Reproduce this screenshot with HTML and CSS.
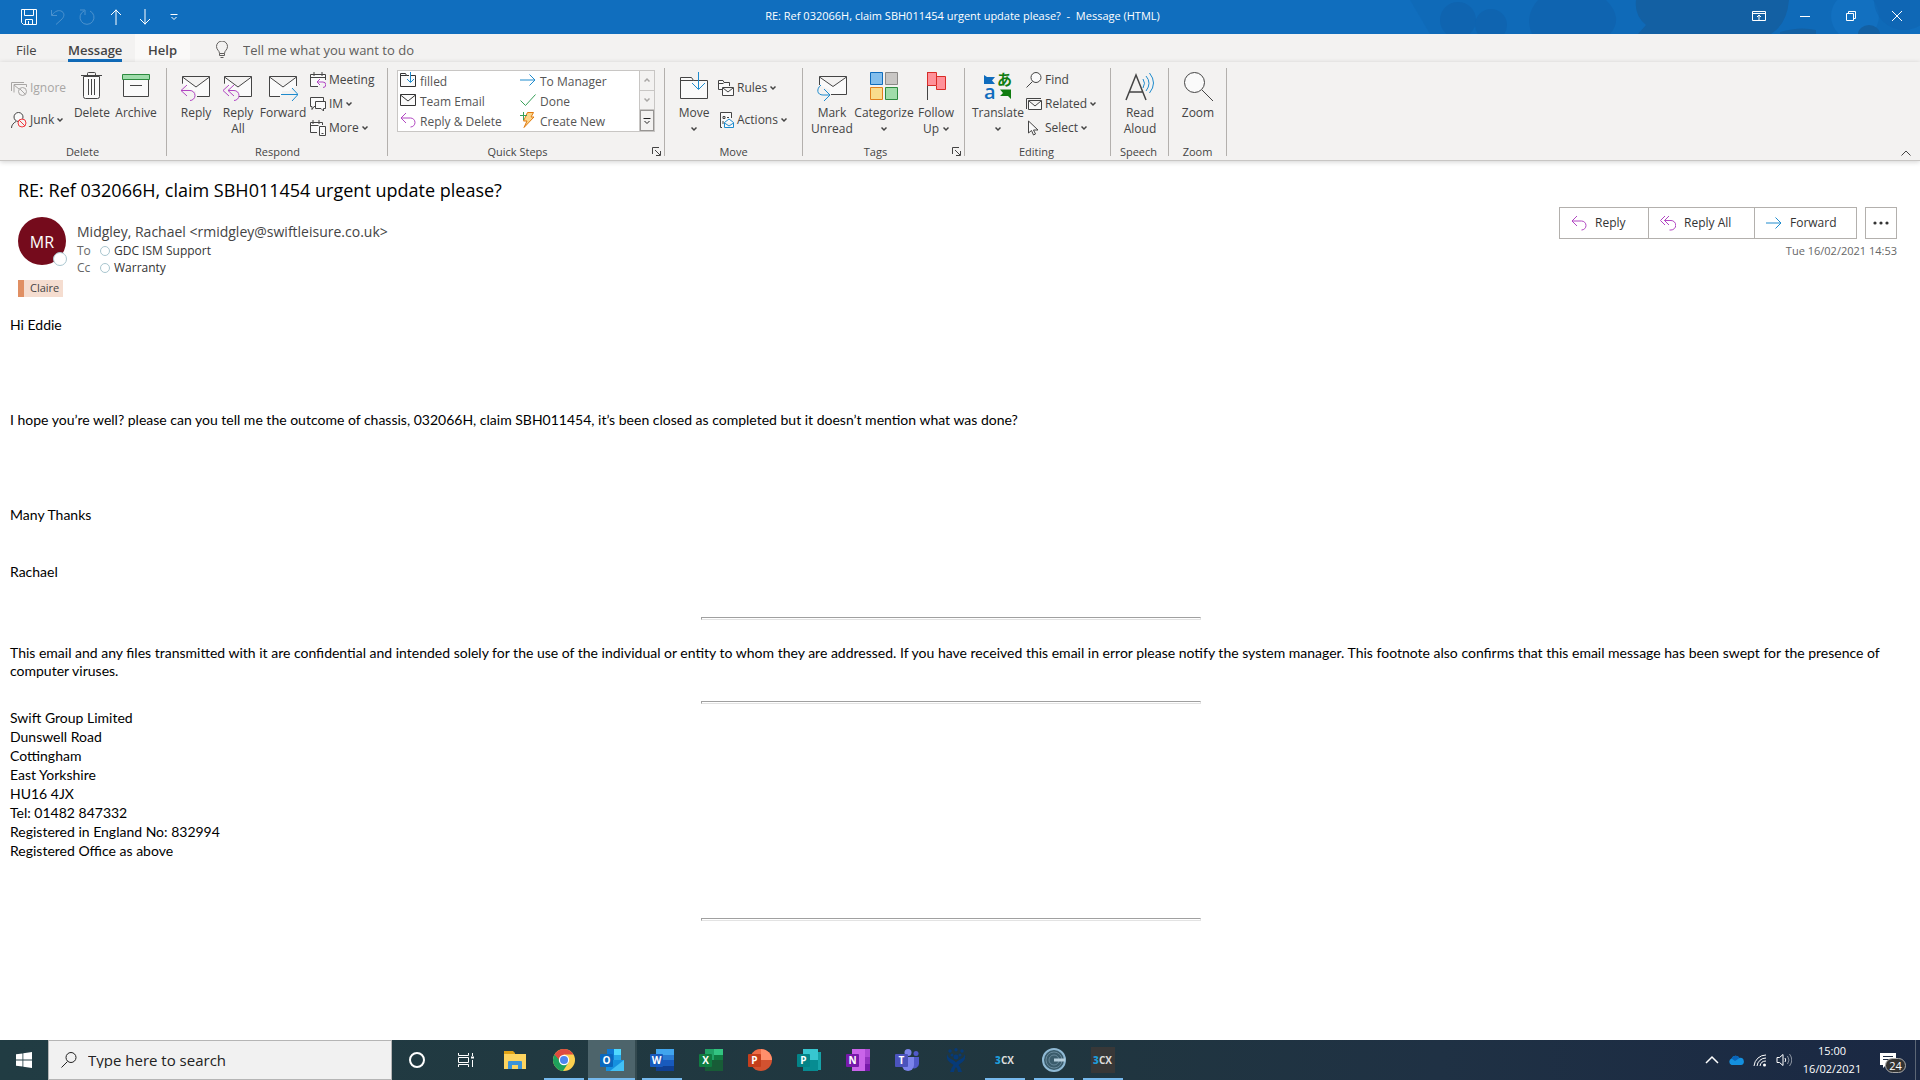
FILE: index.html
```html
<!DOCTYPE html>
<html lang="en">
<head>
<meta charset="utf-8">
<title>RE: Ref 032066H, claim SBH011454 urgent update please? - Message (HTML)</title>
<link rel="stylesheet" href="styles.css">
</head>
<body>
<svg class="defs" aria-hidden="true">
  <symbol id="reply" viewBox="0 0 16 16"><path d="M6 1 1 6l5 5M1 6h9.500a4.500 4.500 0 0 1 0 9" /></symbol>
  <symbol id="replyall" viewBox="0 0 16 16"><path d="M5 1 .5 5.500 5 10M9 1 4.500 5.500 9 10M4.500 5.500H11a4.500 4.500 0 0 1 0 9.500H9.500"/></symbol>
  <symbol id="forward" viewBox="0 0 16 16"><path d="M0 8h15M9.500 2.500 15 8l-5.500 5.500"/></symbol>
  <symbol id="chev" viewBox="0 0 6 6"><path d="m.5 1.500 2.500 2.500 2.500-2.500"/></symbol>
  <symbol id="launch" viewBox="0 0 9 9"><path d="M.5 7V.5H7M3 3l5 5M8.500 4v4.500H4"/></symbol>
  <symbol id="folder" viewBox="0 0 30 30"><path class="f" d="M1.500 6.500h11l2 3h14v18h-27zM1.500 9.500h13"/><path class="bl" d="M19.500 1v17M13 12l6.500 6.500L26 12"/></symbol>
  <symbol id="env" viewBox="0 0 16 16"><path class="f" d="M.5 2.500h15v11H.5z"/><path d="m.5 3 7.500 6 7.500-6"/></symbol>
</svg>

<header class="titlebar">
  <svg class="decor" viewBox="0 0 540 34" preserveAspectRatio="xMaxYMin slice" aria-hidden="true">
    <g fill="#0f64b0"><path d="M30 0h500v34H50z" opacity=".35"/><circle cx="78" cy="20" r="18"/><circle cx="111" cy="25" r="16"/><path d="M158 0h68q18 18 4 34h-78q-8-18 6-34z"/></g>
    <path d="M256 0h153q-2 24-18 34H258l8-9q-12-10-10-25z" fill="#1360a3"/><circle cx="475" cy="16" r="24" fill="#1270c0"/><path d="M400 32q20-6 36-2v4h-36zM478 34a11 9 0 0 1 22 0z" fill="#1360a3"/><circle cx="524" cy="0" r="30" fill="#0f64b0" opacity=".6"/>
  </svg>
  <nav class="quick" aria-label="Quick access">
    <button aria-label="Save"><svg viewBox="0 0 16 16"><path d="M.5.5h15v15h-13l-2-2zM3.500.5v6h9v-6M4.500 15.500v-5h7v5M7.500 12v3"/></svg></button>
    <button aria-label="Undo" class="dim"><svg viewBox="0 0 16 16"><path d="M1.500 1v5.500H7M2 6C5 2 9 .5 12 2.500S14 8 12 10l-6 5.500"/></svg></button>
    <button aria-label="Redo" class="dim"><svg viewBox="0 0 16 16"><path d="M1 1h5v5M11 2a7 7 0 1 1-6 0"/></svg></button>
    <button aria-label="Previous item"><svg viewBox="0 0 16 16"><path d="M8 16V.5M3 6l5-5 5 5"/></svg></button>
    <button aria-label="Next item"><svg viewBox="0 0 16 16"><path d="M8 0v15.500M3 10l5 5 5-5"/></svg></button>
    <button aria-label="Customize"><svg viewBox="0 0 16 16"><path d="M4.500 5.500h7M5.500 8 8 10.500 10.500 8"/></svg></button>
  </nav>
  <h1>RE: Ref 032066H, claim SBH011454 urgent update please?&nbsp; -&nbsp; Message (HTML)</h1>
  <div class="winctl">
    <button aria-label="Ribbon display options"><svg viewBox="0 0 14 14"><path d="M.5 2.500h13v9H.5zM.5 4.500h13M7 11V6.500M5 8l2-2 2 2"/></svg></button>
    <button aria-label="Minimise"><svg viewBox="0 0 14 14"><path d="M2 7.500h10"/></svg></button>
    <button aria-label="Restore"><svg viewBox="0 0 14 14"><path d="M2.500 4.500h7v7h-7zM4.500 4V2.500h7v7H10"/></svg></button>
    <button aria-label="Close"><svg viewBox="0 0 14 14"><path d="m2 2 10 10M12 2 2 12"/></svg></button>
  </div>
</header>

<nav class="tabs">
  <a href="#file" class="file">File</a>
  <a href="#message" class="active">Message</a>
  <a href="#help" class="hover">Help</a>
  <label class="tell"><svg viewBox="0 0 12 18"><path d="M3.500 12.500c0-3-3-3.500-3-7a5.500 5.500 0 0 1 11 0c0 3.500-3 4-3 7zM3.500 12.500v2h5v-2M4.500 16.500h3"/></svg><input type="text" placeholder="Tell me what you want to do"></label>
</nav>

<section class="ribbon" aria-label="Ribbon">
  <div class="group g-delete">
    <div class="tools">
      <div class="stack two">
        <button class="small off" disabled><svg viewBox="0 0 16 16"><path d="M3 12.500V4.500h12.500V7M.5 11V2.500H13M3 5l5 4"/><circle cx="11.500" cy="11.500" r="4"/><path d="m9 9 5 5"/></svg>Ignore</button>
        <button class="small"><svg viewBox="0 0 16 16"><circle class="f" cx="7.500" cy="5" r="4.500"/><path d="M.5 16c0-3 2-5 4.500-6.500"/><circle class="red" cx="11" cy="11" r="4"/><path class="red" d="m8 8 6 6"/></svg>Junk<svg class="chev"><use href="#chev"/></svg></button>
      </div>
      <button class="big w44"><svg viewBox="0 0 30 30"><path class="f" d="M6.500 5.500h16v20a2 2 0 0 1-2 2h-12a2 2 0 0 1-2-2z"/><path d="M4 4.500h21M10.500 4.500v-2a1 1 0 0 1 1-1h6a1 1 0 0 1 1 1v2M11.500 8v16M14.500 8v16M17.500 8v16"/></svg>Delete</button>
      <button class="big w44"><svg viewBox="0 0 30 30"><path class="f" d="M2.500 8.500h25v17h-25z"/><path fill="#9fdcab" stroke="#2c8a3f" d="M1.500 3.500h27v5h-27z"/><path d="M9 14.500h12"/></svg>Archive</button>
    </div>
    <h2>Delete</h2>
  </div>
  <div class="group g-respond">
    <div class="tools">
      <button class="big w42"><svg viewBox="0 0 30 30"><path class="f" d="M1.500 13V5.500h27v20H16M1.500 6l13.500 10L28.500 6"/><path class="gap" d="M1 12v14h14V20H6z"/><path class="pu" d="m6 14-6 5.500L6 25M0 19.500h9a5 5 0 0 1 5 5 5 5 0 0 1-5 5"/></svg>Reply</button>
      <button class="big w42"><svg viewBox="0 0 30 30"><path class="f" d="M1.500 13V5.500h27v20H16M1.500 6l13.500 10L28.500 6"/><path class="gap" d="M1 12v14h15V20H6z"/><path class="pu" d="m6 14-6 5.500L6 25M11 14l-6 5.500 6 5.500M5 19.500h6a5 5 0 0 1 5 5 5 5 0 0 1-5 5"/></svg>Reply All</button>
      <button class="big w48"><svg viewBox="0 0 30 30"><path class="f" d="M12 25.500H1.500v-20h27V15M1.500 6l13.500 10L28.500 6"/><path class="gap" d="M14 20h14v6H14z"/><path class="bl" d="M13 23.500h17M24 17l6 6.500-6 6.500"/></svg>Forward</button>
      <div class="stack three">
        <button class="small"><svg viewBox="0 0 16 16"><path class="f" d="M8 14.500H.5v-12h15V8M.5 5.500h15M4 0v4M12 0v4"/><path class="pu" d="m10 7-3 3 3 3M7 10h6a2.500 2.500 0 0 1 0 5.500"/></svg>Meeting</button>
        <button class="small"><svg viewBox="0 0 16 16"><path class="f" d="M5 10.500H4l-2 3v-3H.5v-9h13V5"/><path class="f" d="M5.500 5.500h10v7h-2v2.500L11 12.500H5.500z"/></svg>IM<svg class="chev"><use href="#chev"/></svg></button>
        <button class="small"><svg viewBox="0 0 16 16"><path class="f" d="M7 12.500H.5v-10h12V5M.5 5.500h8M3 0v4M9 0v4"/><path class="f" d="M9.500 6.500h6v9h-6zM11.500 13.500h2"/></svg>More<svg class="chev"><use href="#chev"/></svg></button>
      </div>
    </div>
    <h2>Respond</h2>
  </div>
  <div class="group g-quick">
    <div class="gallery">
      <div class="steps">
        <button class="step"><svg viewBox="0 0 16 16"><path class="f" d="M10 3.500h5.500v11H.5v-13h5l1 2H9M.5 3.500h6"/><path class="bl" d="M10.500 0v10M7 7l3.500 3.500L14 7"/></svg>filled</button>
        <button class="step"><svg viewBox="0 0 16 16"><path class="bl" d="M0 8h15M9.500 2.500 15 8l-5.500 5.500"/></svg>To Manager</button>
        <button class="step"><svg><use href="#env"/></svg>Team Email</button>
        <button class="step"><svg viewBox="0 0 16 16"><path class="gr" d="m.5 8.500 5 5 10-11"/></svg>Done</button>
        <button class="step"><svg class="pu"><use href="#reply"/></svg>Reply &amp; Delete</button>
        <button class="step"><svg viewBox="0 0 16 16"><path d="M7.500.5h6L11 5h3L4 15.500l3-6.500H3.500z" fill="#fcd58a" stroke="#e07a10"/><path class="gr" d="M3.500 0v8M0 3.500h7"/></svg>Create New</button>
      </div>
      <div class="scroll">
        <button class="off" aria-label="Up"><svg viewBox="0 0 6 6" class="chev"><path d="M.5 4.500 3 2l2.500 2.500"/></svg></button>
        <button class="off" aria-label="Down"><svg class="chev"><use href="#chev"/></svg></button>
        <button class="more" aria-label="All quick steps"><svg viewBox="0 0 8 8"><path d="M.5 1.500h7M1.500 4 4 6.500 6.500 4"/></svg></button>
      </div>
    </div>
    <h2>Quick Steps</h2>
    <button class="launch" aria-label="Quick Steps settings"><svg><use href="#launch"/></svg></button>
  </div>
  <div class="group g-move">
    <div class="tools">
      <button class="big w44"><svg><use href="#folder"/></svg>Move<svg class="chev"><use href="#chev"/></svg></button>
      <div class="stack two">
        <button class="small"><svg viewBox="0 0 16 16"><path class="f" d="M4 9.500H.5v-9H5l1 2h5.500V6M.5 3.500h5"/><path class="f" d="M4.500 7.500h11v8h-11zM5 8l5 4 5-4"/></svg>Rules<svg class="chev"><use href="#chev"/></svg></button>
        <button class="small"><svg viewBox="0 0 16 16"><path class="f" d="M4 15.500H2.500V.5h11V6M5 4.500h2v2H5zM9 5.500h2M5 9v3"/><path fill="#fafafa" class="bl" d="M6.500 10.500 11 7l4.500 3.500v5h-9zM6.500 11l4.500 3 4.500-3"/></svg>Actions<svg class="chev"><use href="#chev"/></svg></button>
      </div>
    </div>
    <h2>Move</h2>
  </div>
  <div class="group g-tags">
    <div class="tools">
      <button class="big w42"><svg viewBox="0 0 30 30"><path class="f" d="M2.500 14V5.500h27v18H14M2.500 6l13.500 9.500L29.500 6"/><path class="gap" d="M2 14v11h11v-6z"/><path class="bl" d="M4 14c-5 4-4 10 2 10h6M7 18l6 6-6 6"/></svg>Mark Unread</button>
      <button class="big w62"><svg viewBox="0 0 30 30"><path fill="#83beec" stroke="#0f6cbd" d="M1.500 1.500h12v12h-12z"/><path fill="#c8c6c4" stroke="#8a8886" d="M16.500 1.500h12v12h-12z"/><path fill="#f9dc8c" stroke="#e0801c" d="M1.500 16.500h12v12h-12z"/><path fill="#a0dcaa" stroke="#2c8a3f" d="M16.500 16.500h12v12h-12z"/></svg>Categorize<svg class="chev"><use href="#chev"/></svg></button>
      <button class="big w42"><svg viewBox="0 0 30 30"><path d="M6.500 1v28"/><path fill="#ff9199" stroke="#d92c27" d="M6.500 1.500h9v4h9v13h-9v-4h-9zM15.500 5v9"/></svg>Follow <span>Up<svg class="chev"><use href="#chev"/></svg></span></button>
    </div>
    <h2>Tags</h2>
    <button class="launch" aria-label="Tags settings"><svg><use href="#launch"/></svg></button>
  </div>
  <div class="group g-edit">
    <div class="tools">
      <button class="big w56"><svg class="trans" viewBox="0 0 30 30"><path fill="#0f6cbd" d="M1 4l3 2h8l-3 3.500 3 3.500H1z"/><path fill="#107c10" d="M28 28l-3-3h-8l3-3-3-3.500h11z"/><text x="14" y="14" class="kana">あ</text><text x="1" y="28" class="latin">a</text></svg>Translate<svg class="chev"><use href="#chev"/></svg></button>
      <div class="stack three">
        <button class="small"><svg viewBox="0 0 16 16"><circle class="f" cx="10" cy="5.500" r="5"/><path d="m6.500 9.500-6 6"/></svg>Find</button>
        <button class="small"><svg viewBox="0 0 16 16"><path d="M.5 13V2.500H15"/><path class="f" d="M2.500 4.500h13v9h-13zM3 5l6 5 6-5"/></svg>Related<svg class="chev"><use href="#chev"/></svg></button>
        <button class="small"><svg viewBox="0 0 16 16"><path class="f" d="M2.500 1v12l3-2.500 2 4.500 2-1-2-4h4.500z"/></svg>Select<svg class="chev"><use href="#chev"/></svg></button>
      </div>
    </div>
    <h2>Editing</h2>
  </div>
  <div class="group g-speech">
    <div class="tools"><button class="big w48"><svg viewBox="0 0 30 30"><path stroke-width="1.500" d="m1 29 10-25 10 25M4.500 21h13"/><path class="bl" d="M18 8q3 4 0 9M21 5q6 7 0 15M24.500 2q8 10 0 20"/></svg>Read Aloud</button></div>
    <h2>Speech</h2>
  </div>
  <div class="group g-zoom">
    <div class="tools"><button class="big w44"><svg viewBox="0 0 30 30"><circle class="f" cx="11.500" cy="11.500" r="10"/><path d="m19 19 11 11"/></svg>Zoom</button></div>
    <h2>Zoom</h2>
  </div>
  <button class="collapse" aria-label="Collapse the ribbon"><svg viewBox="0 0 10 6"><path d="m.5 5.500 4.500-4.500 4.500 4.500"/></svg></button>
</section>

<main>
  <header class="msghead">
    <h2>RE: Ref 032066H, claim SBH011454 urgent update please?</h2>
    <div class="who">
      <div class="avatar">MR<i class="dot"></i></div>
      <div class="people">
        <div class="from">Midgley, Rachael &lt;rmidgley@swiftleisure.co.uk&gt;</div>
        <div class="rcpt"><span>To</span><i></i>GDC ISM Support</div>
        <div class="rcpt"><span>Cc</span><i></i>Warranty</div>
      </div>
      <div class="right">
        <div class="actions">
          <button class="r"><svg class="pu"><use href="#reply"/></svg>Reply</button>
          <button class="ra"><svg class="pu"><use href="#replyall"/></svg>Reply All</button>
          <button class="fw"><svg class="bl"><use href="#forward"/></svg>Forward</button>
          <button class="dots" aria-label="More actions"><svg viewBox="0 0 16 4"><g fill="#333" stroke="none"><circle cx="2" cy="2" r="1.600"/><circle cx="8" cy="2" r="1.600"/><circle cx="14" cy="2" r="1.600"/></g></svg></button>
        </div>
        <time>Tue 16/02/2021 14:53</time>
      </div>
    </div>
    <div class="category">Claire</div>
  </header>
  <article>
    <p class="far">Hi Eddie</p>
    <p class="far">I hope you’re well? please can you tell me the outcome of chassis, 032066H, claim SBH011454, it’s been closed as completed but it doesn’t mention what was done?</p>
    <p class="near">Many Thanks</p>
    <p>Rachael</p>
    <hr>
    <p class="note">This email and any files transmitted with it are confidential and intended solely for the use of the individual or entity to whom they are addressed. If you have received this email in error please notify the system manager. This footnote also confirms that this email message has been swept for the presence of computer viruses.</p>
    <hr class="mid">
    <address>Swift Group Limited<br>Dunswell Road<br>Cottingham<br>East Yorkshire<br>HU16 4JX<br>Tel: 01482 847332<br>Registered in England No: 832994<br>Registered Office as above</address>
    <hr class="last">
  </article>
</main>

<footer class="taskbar">
  <button class="start" aria-label="Start"><svg viewBox="0 0 16 16"><path fill="#fff" stroke="none" d="M0 2.300 6.500 1.400v6.200H0zM7.300 1.300 16 0v7.600H7.300zM0 8.400h6.500v6.200L0 13.700zM7.300 8.400H16V16l-8.700-1.300z"/></svg></button>
  <label class="search"><svg viewBox="0 0 16 16"><circle cx="10" cy="5.500" r="5"/><path d="m6.500 9.500-6 6"/></svg><input type="text" placeholder="Type here to search"></label>
  <div class="apps">
    <button aria-label="Cortana"><svg viewBox="0 0 24 24"><circle class="ring" cx="12" cy="12" r="7"/></svg></button>
    <button aria-label="Task view"><svg viewBox="0 0 24 24"><g class="line"><path d="M4.500 5v2.500h10V5M4.500 19v-2.500h10V19M4.500 9.500h10v5h-10zM18.500 5v3M18.500 12v7"/><path d="M17 9.500h3" stroke-width="2"/></g></svg></button>
    <button aria-label="File Explorer"><svg viewBox="0 0 24 24"><path fill="#e0a316" d="M1 3h9l2 2v4H1z"/><path fill="#fdd45f" d="M1 6h22v15H1z"/><path fill="#3c93d9" d="M5 14q0-1 1-1h12q1 0 1 1v7h-4v-4H9v4H5z"/></svg></button>
    <button class="open" aria-label="Chrome"><svg viewBox="0 0 24 24"><circle cx="12" cy="12" r="11" fill="#fcd04f"/><path fill="#de4b3f" d="M2.500 6.500A11 11 0 0 1 21.500 6.500H12L7 15z"/><path fill="#1fa15c" d="M2.500 6.500A11 11 0 0 0 11 23l5.500-8.500-8-1z"/><circle cx="12" cy="12" r="5.200" fill="#fff"/><circle cx="12" cy="12" r="4" fill="#4d86ee"/></svg></button>
    <button class="open current" aria-label="Outlook"><svg viewBox="0 0 24 24"><path fill="#28a8ea" d="M7 1h14v13H7z"/><path fill="#0f78d4" d="M7 1h7v12H7z"/><path fill="#50d9ff" d="M14 1h7v6h-7z"/><path fill="#1590df" d="M6 12h18v11H6z"/><path fill="#42c0f5" d="m24 12-14 11h14z"/><rect y="6" width="13" height="13" rx="1" fill="#0a68be"/><text x="6.500" y="16">O</text></svg></button>
    <button class="open" aria-label="Word"><svg viewBox="0 0 24 24"><path fill="#41a5ee" d="M6 1h18v6H6z"/><path fill="#2b7cd3" d="M6 7h18v5H6z"/><path fill="#185abd" d="M6 12h18v6H6z"/><path fill="#103f91" d="M6 18h18v5H6z"/><rect y="6" width="13" height="13" rx="1" fill="#185abd"/><text x="6.500" y="16">W</text></svg></button>
    <button aria-label="Excel"><svg viewBox="0 0 24 24"><path fill="#21a366" d="M6 1h9v11H6z"/><path fill="#33c481" d="M15 1h9v6h-9z"/><path fill="#107c41" d="M15 7h9v5h-9z"/><path fill="#185c37" d="M6 12h18v11H6z"/><rect y="6" width="13" height="13" rx="1" fill="#107c41"/><text x="6.500" y="16">X</text></svg></button>
    <button aria-label="PowerPoint"><svg viewBox="0 0 24 24"><circle cx="13" cy="12" r="11" fill="#d35230"/><path fill="#ff8f6b" d="M13 1a11 11 0 0 1 11 11H13z"/><path fill="#ed6c47" d="M13 1a11 11 0 0 0-11 11h11z"/><rect y="6" width="13" height="13" rx="1" fill="#c43e1c"/><text x="6.500" y="16">P</text></svg></button>
    <button aria-label="Publisher"><svg viewBox="0 0 24 24"><path fill="#078c92" d="M6 1h15v22H6z"/><path fill="#37c6d0" d="M6 1h15v11H6z"/><path fill="#16a3a8" d="M21 4h3v18h-3z"/><rect y="6" width="13" height="13" rx="1" fill="#038387"/><text x="6.500" y="16">P</text></svg></button>
    <button aria-label="OneNote"><svg viewBox="0 0 24 24"><path fill="#ca64ea" d="M6 1h13v22H6z"/><path fill="#ae4bd5" d="M19 1h5v8h-5z"/><path fill="#9332bf" d="M19 9h5v7h-5z"/><path fill="#7719aa" d="M19 16h5v7h-5z"/><rect y="6" width="13" height="13" rx="1" fill="#7719aa"/><text x="6.500" y="16">N</text></svg></button>
    <button aria-label="Teams"><svg viewBox="0 0 24 24"><circle cx="13" cy="4.500" r="3.500" fill="#7b83eb"/><circle cx="21" cy="5.500" r="2.500" fill="#5059c9"/><path fill="#5059c9" d="M17 9h7v7a5 5 0 0 1-7 4z"/><path fill="#7b83eb" d="M7 9h12v8a6 6 0 0 1-12 0z"/><rect y="6" width="13" height="13" rx="1" fill="#4b53bc"/><text x="6.500" y="16">T</text></svg></button>
    <button aria-label="Jira"><svg viewBox="0 0 24 24"><g fill="#063a78"><path d="M3 6q1 4 5 5.500 3 1.500 4 3 1-1.500 4-3 4-1.500 5-5.500 1 5-2.500 8-2 1.500-4 3 2.500 3 3.500 7h-4q0-3-2-5-2 2-2 5H6q1-4 3.500-7-2-1.500-4-3Q2 11 3 6z"/><circle cx="12" cy="9" r="2.500"/><circle cx="6" cy="3" r="1.700"/><circle cx="12" cy="1.800" r="1.700"/><circle cx="18" cy="3" r="1.700"/><circle cx="8" cy="7" r="1.500"/><circle cx="16" cy="7" r="1.500"/></g></svg></button>
    <button class="open" aria-label="3CX"><span class="cx"><b>3</b>CX</span></button>
    <button class="open" aria-label="Phone client"><svg viewBox="0 0 24 24"><g class="disc"><circle cx="12" cy="12" r="11"/><circle cx="12" cy="12" r="8"/><circle cx="12" cy="12" r="5"/><path d="M12 12h11"/></g></svg></button>
    <button class="open" aria-label="3CX Phone"><span class="cx dark"><b>3</b>CX</span></button>
  </div>
  <div class="tray">
    <button aria-label="Hidden icons"><svg viewBox="0 0 16 16"><path d="m2 11 6-6 6 6" stroke-width="1.500"/></svg></button>
    <button aria-label="OneDrive"><svg viewBox="0 0 16 16"><path fill="#1490df" stroke="none" d="M3.500 13a3.500 3.500 0 0 1 0-6.500 4.500 4.500 0 0 1 8-.5A3.500 3.500 0 0 1 13 13z"/><path fill="#0a64b8" stroke="none" d="M3.500 6.500a4.500 4.500 0 0 1 8-.5L7 9z"/></svg></button>
    <button aria-label="Network"><svg viewBox="0 0 16 16"><path d="M2 14A12 12 0 0 1 14 3M5 14a9 9 0 0 1 9-8M8 14a6 6 0 0 1 6-5"/><circle cx="12.500" cy="13" r="1.500" fill="#fff" stroke="none"/></svg></button>
    <button aria-label="Volume"><svg viewBox="0 0 16 16"><path d="M1 5.500h2.500l3.500-3v11l-3.500-3H1zM9 6q1.500 2 0 4"/><path opacity=".5" d="M11.500 4q3 4 0 8M13.500 2q4.500 6 0 12"/></svg></button>
    <div class="clock">15:00<br>16/02/2021</div>
    <button class="notif" aria-label="Notifications"><svg viewBox="0 0 16 16"><path fill="#fff" stroke="none" d="M0 0h16v12H6l-3 3v-3H0z"/><path stroke="#1b2a42" d="M3 3.500h10M3 6.500h10"/></svg><span>24</span></button>
  </div>
</footer>
</body>
</html>
```
FILE: styles.css
```css
* { box-sizing: border-box; }
body {
  margin: 0;
  min-height: 100vh;
  display: flex;
  flex-direction: column;
  font: 12px/16px "Open Sans", "Noto Sans", sans-serif;
  color: #444;
  background: #fff;
}
h1, h2, p, address { margin: 0; font: inherit; }
button, input {
  font: inherit;
  color: inherit;
  background: none;
  border: 0;
  padding: 0;
  margin: 0;
}
svg { width: 16px; height: 16px; fill: none; stroke: currentColor; flex: none; }
.defs { position: absolute; width: 0; height: 0; }
.f { fill: #fafafa; }
.gap { fill: #f3f2f1; stroke: none; }
.bl { stroke: #1e8bcd; }
.pu { stroke: #b146c2; }
.gr { stroke: #38a058; }
.red { stroke: #f0383e; fill: #f3f2f1; }
.off { color: #a8a6a4; }

/* title bar */
.titlebar {
  position: relative;
  display: grid;
  grid-template-columns: 1fr auto 1fr;
  align-items: center;
  height: 34px;
  padding: 0 16px 0 21px;
  color: #fff;
  background: #106ebe;
}
.decor { position: absolute; right: 0; top: 0; width: 540px; height: 34px; stroke: none; }
.quick { display: flex; gap: 13px; align-items: center; }
.quick button, .quick svg { display: block; width: 16px; height: 16px; }
.dim { opacity: .25; }
.titlebar h1 { font-size: 11px; padding-bottom: 2px; }
.winctl { position: relative; display: flex; justify-content: flex-end; gap: 32px; padding-bottom: 2px; }
.winctl svg { display: block; width: 14px; height: 14px; }

/* tabs */
.tabs { display: flex; height: 28px; background: #f3f2f1; font-size: 13px; line-height: 32px; }
.tabs a { color: inherit; text-decoration: none; }
.file { width: 68px; padding-left: 16px; }
.active { font-weight: 600; width: 54px; border-bottom: 3px solid #106ebe; white-space: nowrap; }
.hover { font-weight: 600; color: #222; background: #faf9f8; width: 55px; margin-left: 13px; text-align: center; }
.tell { display: flex; align-items: center; gap: 15px; margin-left: 26px; padding-top: 3px; color: #605e5c; }
.tell svg { width: 12px; height: 18px; }
.tell input { width: 220px; }
::placeholder { color: inherit; opacity: 1; }

/* ribbon */
.ribbon {
  position: relative;
  display: flex;
  height: 99px;
  padding: 6px 0 4px;
  background: #f3f2f1;
  border-bottom: 1px solid #c8c6c4;
  box-shadow: 0 1px 5px rgba(0, 0, 0, .18);
}
.group { position: relative; display: flex; flex-direction: column; justify-content: space-between; border-right: 1px solid #b3b0ad; }
.group h2 { text-align: center; font-size: 11px; line-height: 9px; padding-right: 7px; }
.tools { display: flex; height: 72px; }
.g-delete { width: 167px; padding-left: 11px; }
.g-respond { width: 221px; padding-left: 8px; }
.g-quick { width: 277px; padding-left: 9px; }
.g-move { width: 138px; padding-left: 7px; }
.g-tags { width: 162px; padding-left: 8px; }
.g-edit { width: 146px; padding-left: 5px; }
.g-speech { width: 58px; padding-left: 5px; }
.g-zoom { width: 58px; padding-left: 7px; }
.g-delete h2 { padding-right: 12px; }
.g-quick h2, .g-tags h2 { padding-right: 26px; }
.g-tags h2 { padding-right: 24px; }
.g-respond .stack { padding-left: 3px; }
.big { display: flex; flex-direction: column; align-items: center; text-align: center; padding-top: 3px; }
.big > svg:first-child { width: 30px; height: 30px; margin-bottom: 4px; }
.big .chev { margin-top: 5px; }
.big span .chev { margin: 0 0 1px 4px; }
.w42 { width: 42px; }
.w44 { width: 44px; }
.w48 { width: 48px; }
.w56 { width: 56px; }
.w62 { width: 62px; }
.chev { width: 6px; height: 6px; stroke-width: 1.5; }
.stack { display: flex; flex-direction: column; }
.three { gap: 8px; padding-top: 4px; }
.two { gap: 16px; padding-top: 12px; }
.g-move .stack { padding-left: 2px; }
.small { display: flex; align-items: center; gap: 3px; height: 16px; white-space: nowrap; }
.g-delete .stack { width: 59px; }
.gallery { display: flex; width: 258px; height: 62px; margin-top: 2px; border: 1px solid #c8c6c4; background: #fff; color: #555; }
.steps { flex: 1; display: grid; grid-template-columns: 120px 1fr; grid-template-rows: repeat(3, 20px); padding-left: 2px; }
.step { display: flex; align-items: center; gap: 4px; padding-top: 2px; white-space: nowrap; }
.step svg { color: #333; margin-bottom: 5px; }
.scroll { width: 15px; display: flex; flex-direction: column; border-left: 1px solid #c8c6c4; }
.scroll button { flex: 1; display: flex; justify-content: center; align-items: center; border-bottom: 1px solid #c8c6c4; background: #f3f2f1; }
.scroll .more { border: 1px solid #979593; color: #222; }
.more svg { width: 8px; height: 8px; }
.launch { position: absolute; right: 3px; bottom: 0; }
.launch svg { display: block; width: 9px; height: 9px; }
.trans { stroke: none; overflow: visible; }
.kana { fill: #107c10; font: bold 15px "Noto Sans CJK JP", sans-serif; }
.latin { fill: #0f6cbd; font: 600 20px "Open Sans", sans-serif; }
.collapse { margin: auto 9px 0 auto; }
.collapse svg { display: block; width: 10px; height: 6px; }

/* message header */
main { flex: 1; }
.msghead { padding: 17px 23px 0 18px; }
.msghead h2 { color: #000; font-size: 18px; line-height: 24px; }
.who { display: flex; padding-top: 5px; }
.avatar { position: relative; width: 48px; height: 48px; margin-top: 10px; border-radius: 50%; background: #750b1c; color: #fff; font-size: 16px; line-height: 50px; text-align: center; }
.dot { position: absolute; right: -1px; bottom: -1px; width: 14px; height: 14px; border: 1px solid #a9c6cf; border-radius: 50%; background: #fff; }
.people { flex: 1; padding: 14px 0 0 11px; }
.from { font-size: 14px; line-height: 21px; }
.rcpt { display: flex; align-items: center; height: 17px; color: #333; }
.rcpt span { width: 23px; color: #666; }
.rcpt i { width: 10px; height: 10px; margin-right: 4px; border: 1px solid #a9c6cf; border-radius: 50%; }
.right { text-align: right; color: #666; font-size: 11px; }
.actions { display: flex; height: 32px; margin-bottom: 4px; color: #333; font-size: 12px; }
.actions button { display: flex; align-items: center; gap: 8px; padding-left: 11px; border: 1px solid #b3b0ad; white-space: nowrap; }
.actions .r { width: 90px; }
.actions .ra { width: 107px; margin-left: -1px; }
.actions .fw { width: 103px; margin-left: -1px; }
.actions .dots { width: 32px; margin-left: 8px; padding: 0; justify-content: center; }
.dots svg { width: 16px; height: 4px; }
.category { width: 45px; height: 17px; margin-top: 4px; border-left: 6px solid #e08f63; background: #f5ddd0; padding-left: 6px; font-size: 11px; line-height: 16px; }

/* message body */
article { padding: 18px 28px 0 10px; font: 14px/19px Lato, sans-serif; color: #000; }
.far { margin-bottom: 76px; }
.near { margin-bottom: 38px; }
hr { width: 500px; height: 3px; margin: 36px auto 24px; border: 1px solid; border-color: #a0a0a0 #e3e3e3 #e3e3e3 #a0a0a0; }
.note { line-height: 18px; }
.mid { margin: 21px auto 4px; }
.last { margin: 58px auto 0; }
address { font-style: normal; }

/* taskbar */
.taskbar { display: flex; height: 40px; background: linear-gradient(90deg, #213c43, #20363f 55%, #1f3144 75%, #1a2843); color: #fff; }
.start { width: 48px; }
.start svg { display: block; margin: auto; }
.search { display: flex; align-items: center; gap: 11px; width: 344px; padding-left: 12px; border: 1px solid #b5b5b5; background: #f1f1f1; color: #222; font-size: 15px; }
.search input { width: 280px; }
.apps { display: flex; }
.apps button { width: 49px; padding: 0 4px; }
.apps svg { display: block; width: 24px; height: 24px; margin: auto; stroke: none; }
.ring { stroke: #fff; stroke-width: 2; }
.line { stroke: #fff; }
.disc { stroke: #68899b; fill: #3b5c6c; }
.disc circle:first-child { stroke: #8fb9d4; stroke-width: 2; }
.disc path { stroke: #b6cfdd; stroke-width: 3; }
.apps text { fill: #fff; font: bold 10px "Open Sans", sans-serif; text-anchor: middle; }
.open { background: linear-gradient(#76b9ed, #76b9ed) center bottom / 40px 2px no-repeat; }
.apps .current { background: linear-gradient(#76b9ed, #76b9ed) center bottom / 100% 2px no-repeat, #4d646b; border-right: 2px solid #33494f; }
.cx { display: block; width: 24px; margin: auto; font: bold 10px/26px "Open Sans", sans-serif; color: #ddd; }
.cx b { color: #1e9bd7; }
.dark { background: #383838; }
.tray { display: flex; align-items: center; margin-left: auto; padding-right: 4px; }
.tray button { width: 24px; }
.tray svg { display: block; margin: auto; }
.clock { width: 72px; text-align: center; font-size: 11px; line-height: 18px; }
.tray .notif { position: relative; width: 48px; height: 40px; border-right: 1px solid #5c6675; }
.notif svg { margin: 1px 0 0 12px; }
.notif span { position: absolute; left: 17px; top: 18px; width: 21px; height: 15px; border: 1px solid #aaa; border-radius: 8px; background: #333; font-size: 11px; line-height: 13px; }
```
